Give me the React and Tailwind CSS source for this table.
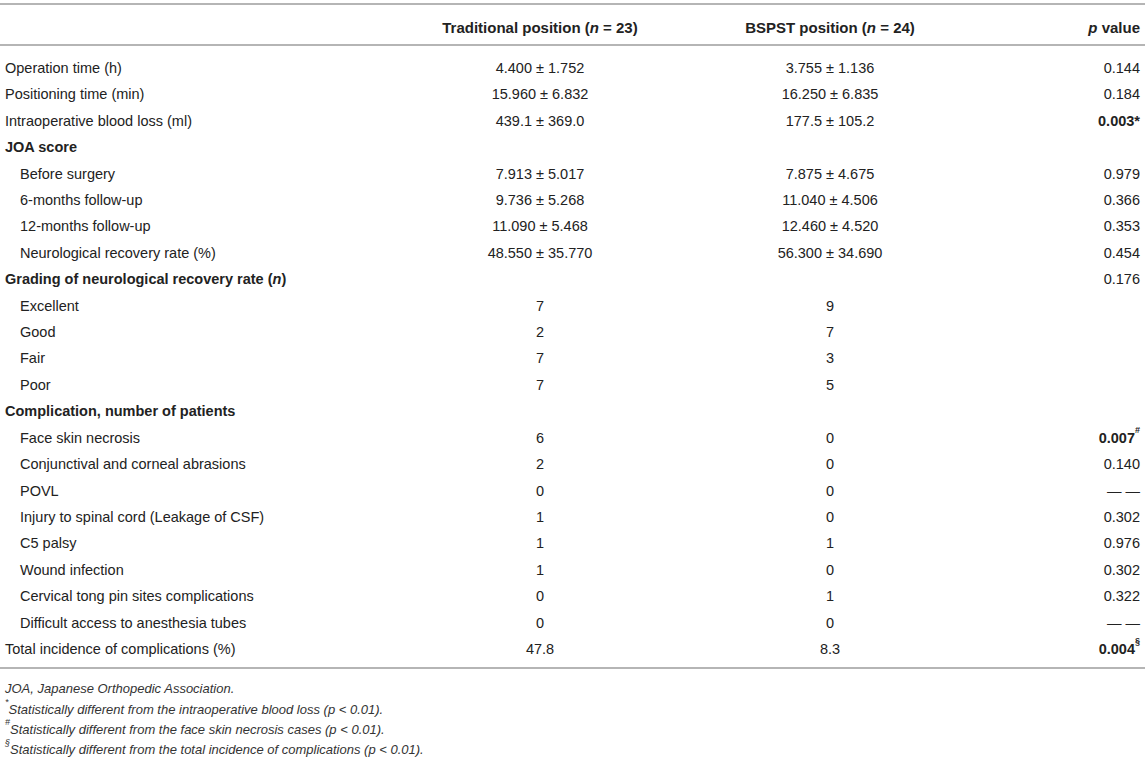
import React from "react";

const rows = [
  { label: "Operation time (h)", a: "4.400 ± 1.752", b: "3.755 ± 1.136", p: "0.144" },
  { label: "Positioning time (min)", a: "15.960 ± 6.832", b: "16.250 ± 6.835", p: "0.184" },
  { label: "Intraoperative blood loss (ml)", a: "439.1 ± 369.0", b: "177.5 ± 105.2", p: "0.003", bold: true, mark: "*" },
  { label: "JOA score", head: true },
  { label: "Before surgery", sub: true, a: "7.913 ± 5.017", b: "7.875 ± 4.675", p: "0.979" },
  { label: "6-months follow-up", sub: true, a: "9.736 ± 5.268", b: "11.040 ± 4.506", p: "0.366" },
  { label: "12-months follow-up", sub: true, a: "11.090 ± 5.468", b: "12.460 ± 4.520", p: "0.353" },
  { label: "Neurological recovery rate (%)", sub: true, a: "48.550 ± 35.770", b: "56.300 ± 34.690", p: "0.454" },
  { label: "grading", head: true, p: "0.176" },
  { label: "Excellent", sub: true, a: "7", b: "9" },
  { label: "Good", sub: true, a: "2", b: "7" },
  { label: "Fair", sub: true, a: "7", b: "3" },
  { label: "Poor", sub: true, a: "7", b: "5" },
  { label: "Complication, number of patients", head: true },
  { label: "Face skin necrosis", sub: true, a: "6", b: "0", p: "0.007", bold: true, sup: "#" },
  { label: "Conjunctival and corneal abrasions", sub: true, a: "2", b: "0", p: "0.140" },
  { label: "POVL", sub: true, a: "0", b: "0", p: "— —" },
  { label: "Injury to spinal cord (Leakage of CSF)", sub: true, a: "1", b: "0", p: "0.302" },
  { label: "C5 palsy", sub: true, a: "1", b: "1", p: "0.976" },
  { label: "Wound infection", sub: true, a: "1", b: "0", p: "0.302" },
  { label: "Cervical tong pin sites complications", sub: true, a: "0", b: "1", p: "0.322" },
  { label: "Difficult access to anesthesia tubes", sub: true, a: "0", b: "0", p: "— —" },
  { label: "Total incidence of complications (%)", a: "47.8", b: "8.3", p: "0.004", bold: true, sup: "§" },
];

const Label = ({ r }) => {
  if (r.label === "grading") {
    return (
      <>
        Grading of neurological recovery rate (<i>n</i>)
      </>
    );
  }
  return r.label;
};

export default function App() {
  return (
    <div
      className="bg-white text-[#222] pt-[3px] w-[1145px] h-[759px] overflow-hidden"
      style={{ fontFamily: '"Liberation Sans", Arial, sans-serif' }}
    >
      <table className="w-full table-fixed border-collapse text-[14.5px]">
        <colgroup>
          <col className="w-[420px]" />
          <col className="w-[240px]" />
          <col className="w-[340px]" />
          <col />
        </colgroup>
        <thead>
          <tr className="border-t-2 border-b-2 border-[#b5b5b5] h-[41px] text-[15px]">
            <th></th>
            <th className="font-bold text-center pt-[7px]">
              Traditional position (<i>n</i> = 23)
            </th>
            <th className="font-bold text-center pt-[7px]">
              BSPST position (<i>n</i> = 24)
            </th>
            <th className="font-bold text-right pr-[5px] pt-[7px]">
              <i>p</i> value
            </th>
          </tr>
        </thead>
        <tbody>
          <tr className="h-[10px]">
            <td colSpan={4}></td>
          </tr>
          {rows.map((r, i) => (
            <tr key={i} className="h-[26.4px] leading-[26.4px]">
              <td
                className={`${r.sub ? "pl-[20px]" : "pl-[5px]"} ${r.head ? "font-bold" : ""} whitespace-nowrap`}
              >
                <Label r={r} />
              </td>
              <td className="text-center">{r.a}</td>
              <td className="text-center">{r.b}</td>
              <td className={`text-right pr-[5px] ${r.bold ? "font-bold" : ""}`}>
                {r.p}
                {r.mark}
                {r.sup && <sup className="text-[9px] align-[5px] leading-none">{r.sup}</sup>}
              </td>
            </tr>
          ))}
          <tr className="h-[6px] border-b-2 border-[#b5b5b5]">
            <td colSpan={4}></td>
          </tr>
        </tbody>
      </table>
      <div className="pl-[5px] pt-[10px] text-[13px] italic leading-[20.3px] text-[#333]">
        <div>JOA, Japanese Orthopedic Association.</div>
        <div>
          <sup className="text-[9px] align-[4px] leading-none">*</sup>Statistically different from the intraoperative blood loss (p &lt; 0.01).
        </div>
        <div>
          <sup className="text-[9px] align-[4px] leading-none">#</sup>Statistically different from the face skin necrosis cases (p &lt; 0.01).
        </div>
        <div>
          <sup className="text-[9px] align-[4px] leading-none">§</sup>Statistically different from the total incidence of complications (p &lt; 0.01).
        </div>
      </div>
    </div>
  );
}
